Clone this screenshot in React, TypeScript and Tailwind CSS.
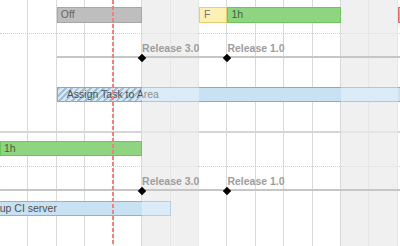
import React from "react";

const COLS = Array.from({ length: 15 }, (_, i) => i);
const WEEKEND = [5, 6, 12, 13];
const DASHES = Array.from({ length: 42 }, (_, i) => i);

function Milestone({ label, className }: { label: string; className: string }) {
  return (
    <div className={`row-start-1 flex flex-col items-start self-start pt-[8px] ${className}`}>
      <span className="whitespace-nowrap text-[10.5px] font-bold leading-[12px] text-[#9d9d9d]">{label}</span>
      <div className="ml-[-3px] mt-[0.5px] size-[6px] rotate-45 bg-black" />
    </div>
  );
}

export default function App() {
  return (
    <div className="relative h-[246px] w-[400px] overflow-hidden bg-white font-['Liberation_Sans',Arial,sans-serif]">
      {/* day columns */}
      <div className="absolute inset-0 grid grid-cols-[repeat(15,28.43px)]">
        {COLS.map((c) => (
          <div
            key={c}
            className={
              WEEKEND.includes(c)
                ? "border-r border-[#d9d9d9] bg-[#e9e9e9]"
                : "border-r border-[#d9d9d9]"
            }
          />
        ))}
      </div>

      {/* weekend shade over the bars */}
      <div className="pointer-events-none absolute inset-0 z-20 grid grid-cols-[repeat(15,28.43px)]">
        {COLS.map((c) => (
          <div key={c} className={WEEKEND.includes(c) ? "bg-white/35" : ""} />
        ))}
      </div>

      {/* today line */}
      <div className="absolute left-[112px] top-0 z-40 flex h-full w-[2px] flex-col gap-[2px] overflow-hidden">
        {DASHES.map((i) => (
          <div key={i} className="h-[4px] w-[2px] shrink-0 bg-[#ec8282]" />
        ))}
      </div>

      <div className="flex flex-col text-[10.5px] text-[#505050]">
        {/* row: off / F / 1h */}
        <div className="relative z-10 grid h-[34px] grid-cols-[repeat(15,28.43px)] border-b border-dotted border-[#cdcdcd]">
          <div className="col-span-3 col-start-3 mt-[7px] flex h-[16px] items-center self-start border border-[#a6a6a6] bg-[#bebebe] px-[3px] text-[#666]">
            Off
          </div>
          <div className="col-span-1 col-start-8 mt-[7px] flex h-[16px] items-center self-start border border-[#e6cf6c] bg-[#fdf0b4] px-[4px] text-[#777]">
            F
          </div>
          <div className="col-span-4 col-start-9 mt-[7px] flex h-[16px] items-center self-start border border-[#6cc45d] bg-[#8fd480] px-[3px] text-[#48613f]">
            1h
          </div>
          <div className="col-start-15 ml-[0.5px] mt-[7px] h-[16px] self-start border border-[#e06a6a] bg-[#f2a3a3]" />
        </div>

        {/* milestones */}
        <div className="relative z-30 grid h-[32px] grid-cols-[repeat(15,28.43px)]">
          <div className="col-span-13 col-start-3 row-start-1 mt-[22px] h-[2px] self-start bg-[#c6c6c6]" />
          <Milestone label="Release 3.0" className="col-start-6" />
          <Milestone label="Release 1.0" className="col-start-9" />
        </div>

        {/* assign task */}
        <div className="relative z-10 grid h-[67px] grid-cols-[repeat(15,28.43px)] border-b-2 border-[#d6d6d6]">
          <div className="col-span-13 col-start-3 mt-[21px] flex h-[15px] items-center self-start whitespace-nowrap border-y border-l border-[#80acd2] bg-[#c8e1f3] bg-[repeating-linear-gradient(135deg,#a0bfd9_0_2px,#d7e6f1_2px_4.5px)] bg-size-[84px_100%] bg-no-repeat pl-[9px]">
            Assign Task to Area
          </div>
        </div>

        {/* 1h */}
        <div className="relative z-10 grid h-[34px] grid-cols-[repeat(15,28.43px)] border-b border-dotted border-[#cdcdcd]">
          <div className="col-span-5 col-start-1 mt-[8px] flex h-[15px] items-center self-start border border-[#6cc45d] bg-[#8fd480] px-[3px] text-[#48613f]">
            1h
          </div>
        </div>

        {/* milestones */}
        <div className="relative z-30 grid h-[32px] grid-cols-[repeat(15,28.43px)]">
          <div className="col-span-15 col-start-1 row-start-1 mt-[22px] h-[2px] self-start bg-[#c6c6c6]" />
          <Milestone label="Release 3.0" className="col-start-6" />
          <Milestone label="Release 1.0" className="col-start-9" />
        </div>

        {/* setup ci, starts before the visible range */}
        <div className="relative z-10 grid h-[47px] grid-cols-[repeat(15,28.43px)]">
          <div className="col-span-6 col-start-1 ml-[-21px] mt-[2px] flex h-[15px] items-center self-start whitespace-nowrap border border-[#86b5da] bg-[#c8e1f3] pl-[4px]">
            Setup CI server
          </div>
        </div>
      </div>
    </div>
  );
}
